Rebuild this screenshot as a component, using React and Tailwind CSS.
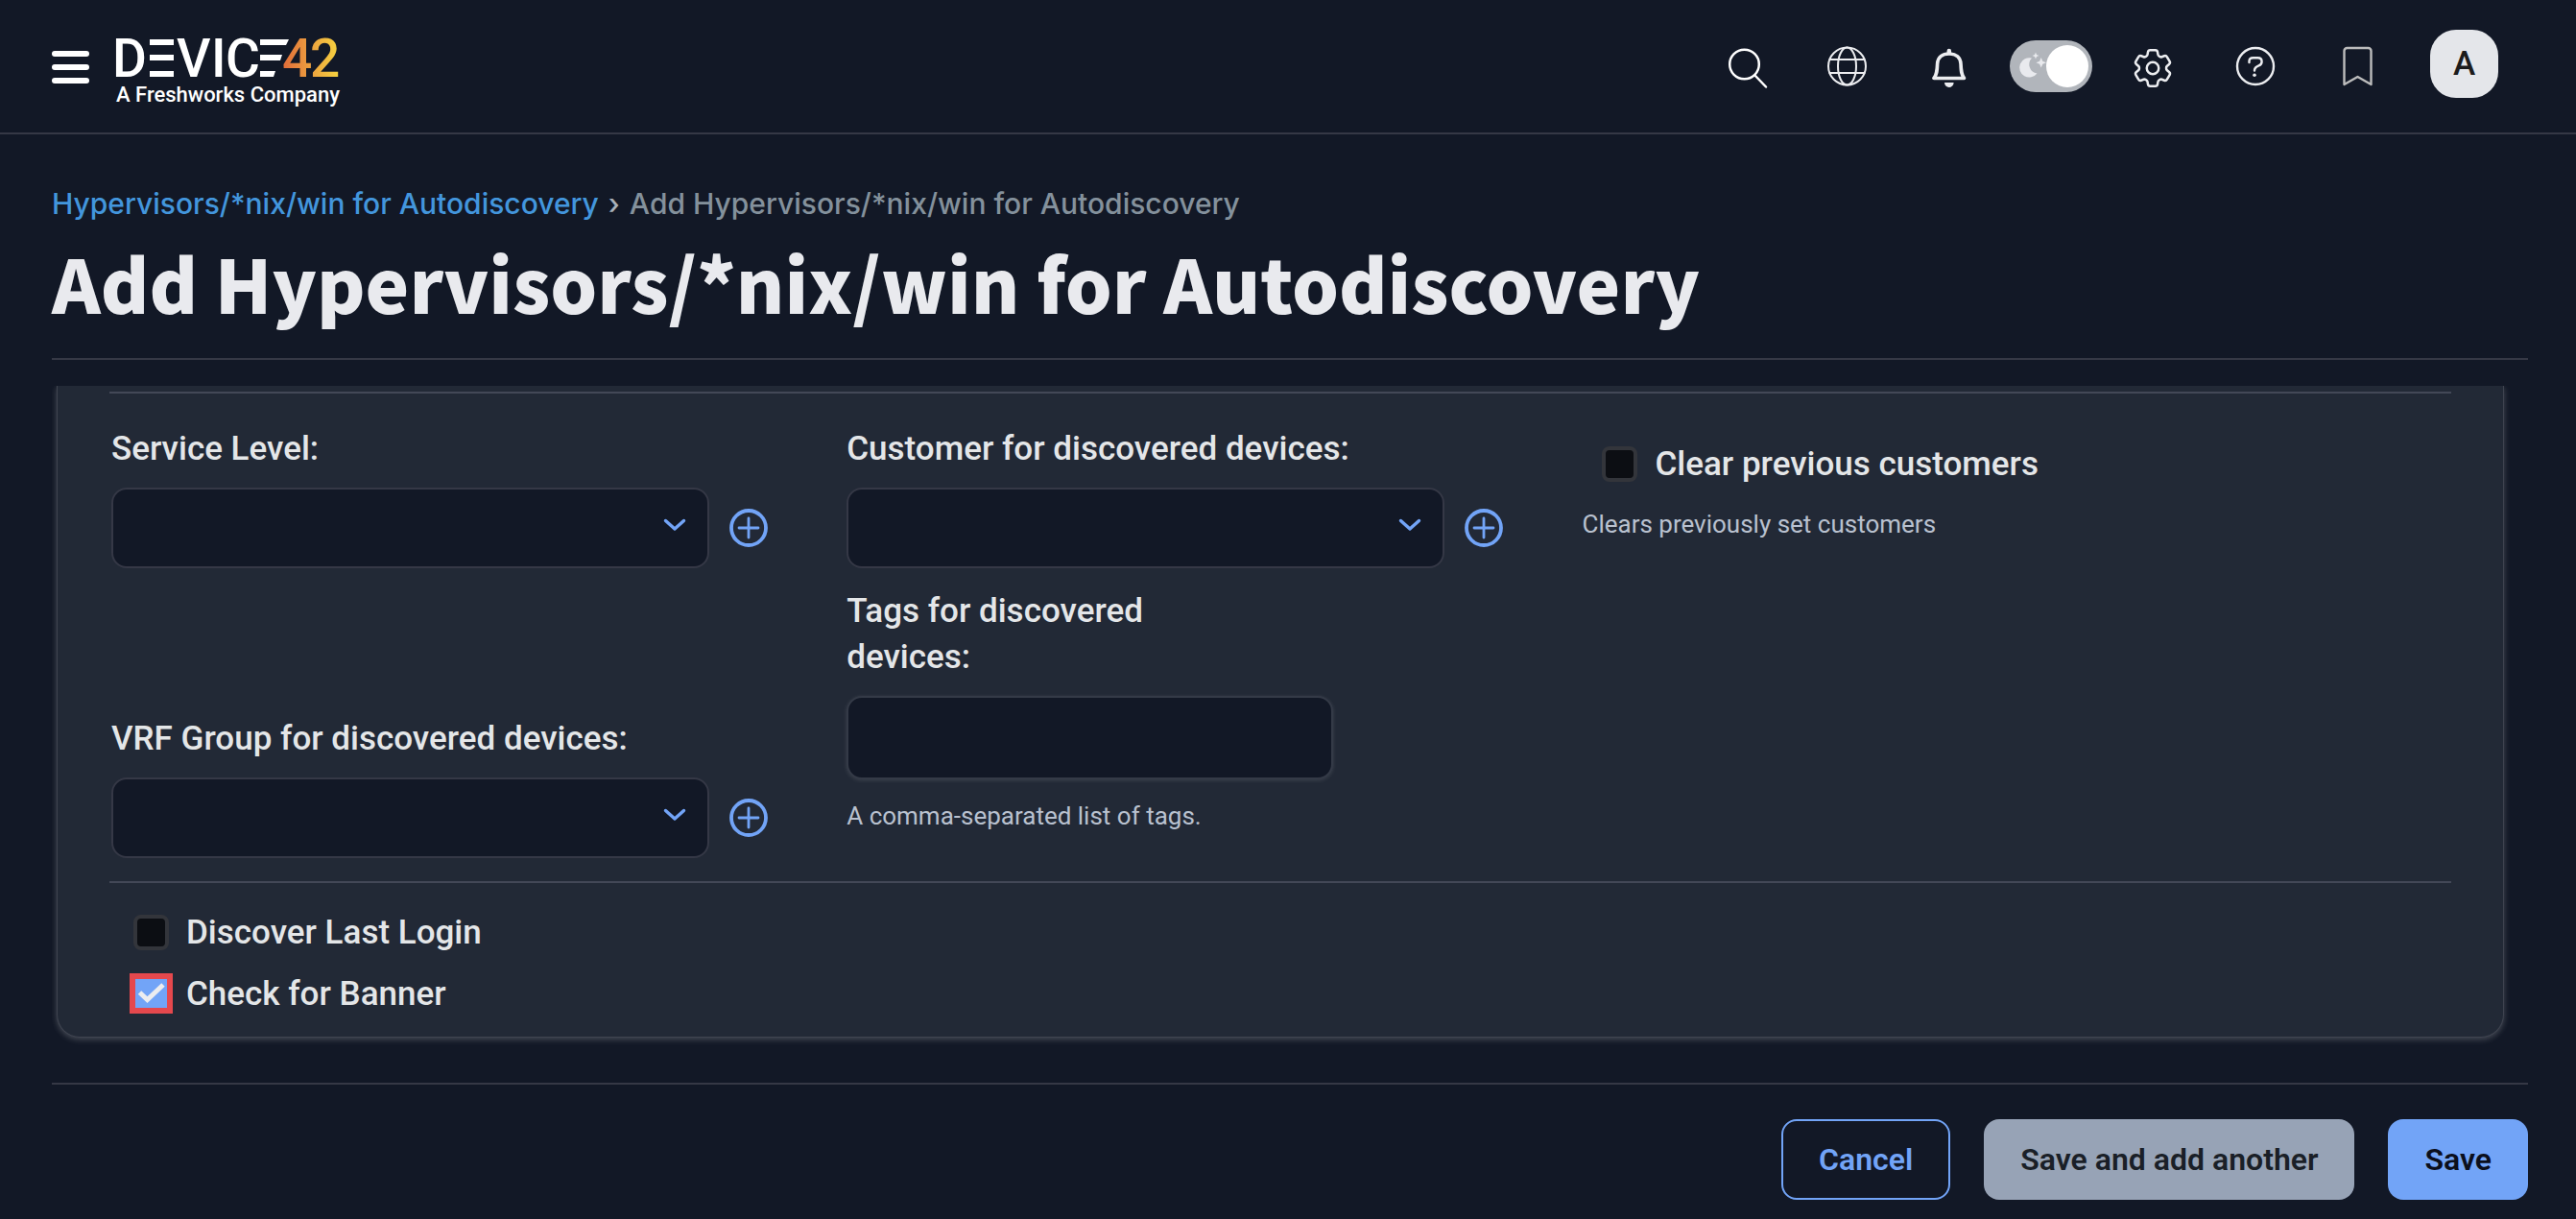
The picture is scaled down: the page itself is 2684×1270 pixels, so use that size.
import { useId, useState } from "react";
import { HiOutlineCog6Tooth } from "react-icons/hi2";

function Logo() {
  return (
    <a href="#home" aria-label="Device42, a Freshworks company" className="flex flex-col">
      <svg viewBox="0 0 232 48" className="h-12 w-[232px] overflow-visible" fontFamily="Roboto, sans-serif" fontSize="55" fontWeight="500">
        <defs>
          <linearGradient id="logo-amber" gradientUnits="userSpaceOnUse" x1="176" y1="20" x2="232" y2="20">
            <stop offset="0" stopColor="#e2703a" />
            <stop offset="0.5" stopColor="#eda33f" />
            <stop offset="1" stopColor="#f6d33f" />
          </linearGradient>
        </defs>
        <g fill="#ffffff">
          <text x="-4" y="45">D</text>
          <path d="M35 6h25v6h-25zM35 22h25v6h-25zM35 39h25v6h-25z" />
          <text x="63" y="45">V</text>
          <text x="99" y="45">I</text>
          <text x="114" y="45">C</text>
          <path d="M150 6h30l-3 6h-27zM150 22h23l-2 6h-21zM150 39h16l-2 6h-14z" />
        </g>
        <g fill="url(#logo-amber)">
          <text x="173" y="45">4</text>
          <text x="202" y="45">2</text>
        </g>
      </svg>
      <span className="pt-0.5 text-[22px] leading-7 font-medium text-white">A Freshworks Company</span>
    </a>
  );
}

function Glyph({ children, width = 2.2, color = "#ecedf0" }) {
  return (
    <svg viewBox="0 0 48 48" className="size-12" fill="none" stroke={color} strokeWidth={width} strokeLinecap="round" strokeLinejoin="round" aria-hidden="true">
      {children}
    </svg>
  );
}

function IconButton({ label, children }) {
  return (
    <button type="button" aria-label={label} className="flex h-14 w-[106px] items-center justify-center">
      {children}
    </button>
  );
}

function ThemeSwitch() {
  const [dark, setDark] = useState(true);
  return (
    <div className="flex w-[106px] justify-center">
      <button
        type="button"
        role="switch"
        aria-checked={dark}
        aria-label="Dark mode"
        onClick={() => setDark(!dark)}
        className="flex h-[54px] w-[86px] items-center justify-between rounded-full bg-[#b1b5bb] pr-1"
      >
        <svg viewBox="0 0 38 54" className="h-[54px] w-[38px]" fill="#e9eaee" aria-hidden="true">
          <path d="M23 18.500A10.200 10.200 0 1 0 28.500 34.500A9.500 9.500 0 0 1 23 18.500Z" />
          <path d="M27 12.500l1 2.500 2.500 1-2.500 1-1 2.500-1-2.500-2.500-1 2.500-1z" />
          <path d="M32.700 18l1.600 3.800 3.700 1.500-3.700 1.500-1.600 3.800-1.600-3.800-3.700-1.500 3.700-1.500z" />
        </svg>
        <span className="size-11 rounded-full bg-white" />
      </button>
    </div>
  );
}

function Header() {
  return (
    <header className="flex h-[140px] items-center justify-between border-b-2 border-[#353845] pr-[81px] pl-[54px]">
      <div className="flex items-center gap-7">
        <button type="button" aria-label="Menu" className="flex w-[39px] flex-col gap-2 pt-0.5">
          <span className="h-1.5 rounded-full bg-white" />
          <span className="h-1.5 rounded-full bg-white" />
          <span className="h-1.5 rounded-full bg-white" />
        </button>
        <div className="pt-2.5"><Logo /></div>
      </div>
      <div className="flex items-center">
        <IconButton label="Search">
          <Glyph color="#ffffff" width={2.5}>
            <circle cx="22.500" cy="22" r="15.300" />
            <path d="M33.500 33.500L45 45.500" />
          </Glyph>
        </IconButton>
        <IconButton label="Language">
          <Glyph width={2}>
            <circle cx="23.500" cy="24" r="19.500" />
            <ellipse cx="23.500" cy="24" rx="9.500" ry="19.500" />
            <path d="M5.500 17h36M5.500 31h36" />
          </Glyph>
        </IconButton>
        <IconButton label="Notifications">
          <Glyph width={3.6}>
            <path d="M8 36.500H39.500C36.500 33 36.300 29 36 21.500C35.600 14.500 30.800 11 23.800 11S12 14.500 11.600 21.500C11.300 29 11 33 8 36.500Z" />
            <path d="M23.800 8v2" strokeWidth="4.500" />
            <path d="M19 41h9.600a4.800 5 0 0 1-9.600 0z" fill="#ecedf0" stroke="none" />
          </Glyph>
        </IconButton>
        <ThemeSwitch />
        <IconButton label="Settings">
          <HiOutlineCog6Tooth className="mt-1 size-[50px] text-[#ecedf0]" strokeWidth={1.2} />
        </IconButton>
        <IconButton label="Help">
          <Glyph width={2.4}>
            <circle cx="25" cy="24" r="19" />
            <path d="M18.500 20V18.800C18.500 16.500 20 15.300 22.500 15.300H27.500C30 15.300 31.600 16.800 31.600 19.200C31.600 21.500 30.500 22.600 28.500 23.400C25.500 24.600 24 25.500 24 28.500" />
            <circle cx="24" cy="33.200" r="1.800" fill="#ecedf0" stroke="none" />
          </Glyph>
        </IconButton>
        <IconButton label="Bookmarks">
          <Glyph width={2.4} color="#bcbcbc">
            <path d="M11.500 43V8a3 3 0 0 1 3-3h22a3 3 0 0 1 3 3V43L25.500 35Z" />
          </Glyph>
        </IconButton>
        <button type="button" aria-label="Account A" className="mb-1.5 ml-6 size-[71px] rounded-[27px] bg-[#e4e6ea] text-[35px] leading-[71px] font-medium text-[#1c1c1c]">
          A
        </button>
      </div>
    </header>
  );
}

function PlusButton({ label }) {
  return (
    <button type="button" aria-label={label} className="shrink-0">
      <svg viewBox="0 0 40 40" className="size-10" fill="none" stroke="#72a4f7" strokeLinecap="round" aria-hidden="true">
        <circle cx="20" cy="20" r="18" strokeWidth="3.800" />
        <path d="M20 10v20M10 20h20" strokeWidth="2.800" />
      </svg>
    </button>
  );
}

function SelectField({ label, className }) {
  const id = useId();
  return (
    <div className={className}>
      <label htmlFor={id} className="block text-[35px] leading-12 font-medium">{label}</label>
      <div className="mt-4 flex items-center gap-[21px] pr-[82px]">
        <div className="relative flex-1">
          <select id={id} className="block h-[84px] w-full appearance-none rounded-2xl border-2 border-[#353846] bg-[#121826] px-6 text-[35px]">
            <option value=""></option>
          </select>
          <svg viewBox="0 0 24 14" className="pointer-events-none absolute top-8 right-6 h-3.5 w-6" fill="none" stroke="#72a4f7" strokeWidth="3.400" strokeLinecap="round" strokeLinejoin="round" aria-hidden="true">
            <path d="M2.500 2.500L12 11L21.500 2.500" />
          </svg>
        </div>
        <PlusButton label={"Add: " + label} />
      </div>
    </div>
  );
}

function CheckField({ label, className, marked }) {
  const id = useId();
  return (
    <div className={"flex items-center gap-[18px] " + (className || "")}>
      {marked ? (
        <span className="relative flex">
          <input
            id={id}
            type="checkbox"
            defaultChecked
            className="peer h-[34px] w-[37px] appearance-none border-2 border-[#e5484d] bg-[#121826] outline-4 outline-[#e5484d] checked:bg-[#72a4f7]"
          />
          <svg viewBox="0 0 37 34" className="pointer-events-none absolute inset-0 hidden h-[34px] w-[37px] peer-checked:block" fill="none" stroke="#ecedf0" strokeWidth="5" aria-hidden="true">
            <path d="M6.500 16L14.500 23.500L31 8" />
          </svg>
        </span>
      ) : (
        <input
          id={id}
          type="checkbox"
          className="size-[37px] appearance-none rounded-lg border-4 border-[#33353b] bg-[#0c0e13] checked:bg-[#72a4f7]"
        />
      )}
      <label htmlFor={id} className="pt-0.5 text-[35px] leading-12 font-medium">{label}</label>
    </div>
  );
}

function TagsField() {
  return (
    <div className="pb-6">
      <label htmlFor="tags" className="block max-w-[380px] text-[35px] leading-12 font-medium">Tags for discovered devices:</label>
      <input
        id="tags"
        type="text"
        aria-describedby="tags-help"
        className="mt-4 block h-[87px] w-[507px] max-w-full rounded-2xl border-2 border-[#343a47] bg-[#121826] px-6 text-[35px] shadow-[0_1px_4px_rgba(255,255,255,0.12)]"
      />
      <p id="tags-help" className="mt-[18px] text-[26px] leading-10 text-[#b9c1cf]">A comma-separated list of tags.</p>
    </div>
  );
}

export default function App() {
  return (
    <div className="flex min-h-screen flex-col bg-[#121826] font-['Roboto',sans-serif] text-[#e4e6e8]">
      <Header />
      <main className="pr-[50px] pl-[54px]">
        <nav aria-label="Breadcrumb" className="flex gap-2.5 pt-[52px] font-['Inter',sans-serif] text-[30px] leading-10 font-medium">
          <a href="#hypervisors" className="text-[#4396dd]">Hypervisors/*nix/win for Autodiscovery</a>
          <span className="text-[#a9b1ba]">›</span>
          <span className="text-[#84919c]">Add Hypervisors/*nix/win for Autodiscovery</span>
        </nav>
        <h1 className="mt-3.5 border-b-2 border-[#353845] pb-[31px] font-['Noto_Sans_CJK_SC',sans-serif] text-[77px] leading-24 font-black text-[#e9eaee]">
          Add Hypervisors/*nix/win for Autodiscovery
        </h1>

        <form>
          <div className="mt-[27px] overflow-hidden pr-[25px] pb-2 pl-[5px]">
            <section className="rounded-b-3xl border-x border-b border-[#3f4450] bg-[#222936] px-[54px] pt-1.5 pb-5 shadow-[0_2px_6px_rgba(255,255,255,0.22)]">
              <hr className="border-t-2 border-[#434857]" />
              <div className="mt-[34px] grid grid-cols-[22fr_22fr_26fr] gap-y-[21px] pl-0.5">
                <SelectField label="Service Level:" />
                <SelectField label="Customer for discovered devices:" />
                <div className="pt-3.5">
                  <CheckField label="Clear previous customers" className="pl-[21px]" />
                  <p className="mt-[18px] text-[26px] leading-10 text-[#b9c1cf]">Clears previously set customers</p>
                </div>
                <SelectField label="VRF Group for discovered devices:" className="self-end" />
                <TagsField />
              </div>
              <hr className="mt-6 border-t-2 border-[#434857]" />
              <div className="mt-[26px] flex flex-col gap-3.5 pl-[25px]">
                <CheckField label="Discover Last Login" />
                <CheckField label="Check for Banner" marked />
              </div>
            </section>
          </div>

          <div className="mt-[39px] flex justify-end gap-[35px] border-t-2 border-[#353845] pt-9 pb-[18px] text-[32px] leading-10 font-semibold">
            <button type="button" className="h-[84px] rounded-2xl border-2 border-[#72a4f7] px-[37px] text-[#72a4f7]">Cancel</button>
            <button type="submit" className="h-[84px] rounded-2xl bg-[#97a3b6] px-[38px] text-[#1a1f27]">Save and add another</button>
            <button type="submit" className="h-[84px] rounded-2xl bg-[#72a4f7] px-[38px] text-[#0b0f1c]">Save</button>
          </div>
        </form>
      </main>
    </div>
  );
}
